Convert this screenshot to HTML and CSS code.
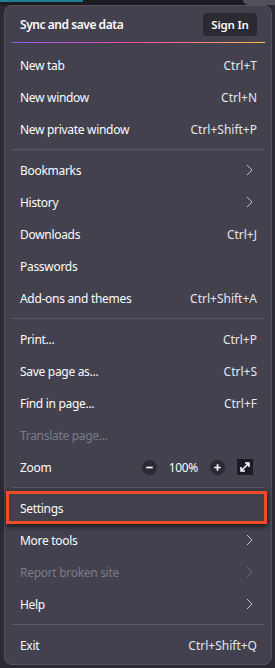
FILE: index.html
```html
<!DOCTYPE html>
<html lang="en">
<head>
    <meta charset="UTF-8">
    <meta name="viewport" content="width=device-width, initial-scale=1.0">
    <title>App menu</title>
    <link rel="stylesheet" href="styles.css">
</head>
<body>
    <div class="topbar">
        <div class="tab-line"></div>
        <div class="top-right"></div>
    </div>

    <div class="panel">
        <!-- Account header -->
        <div class="header">
            <span class="header-title">Sync and save data</span>
            <button class="sign-in">Sign In</button>
        </div>
        <div class="gradient-line"></div>

        <div class="item"><span class="label">New tab</span><span class="shortcut">Ctrl+T</span></div>
        <div class="item"><span class="label">New window</span><span class="shortcut">Ctrl+N</span></div>
        <div class="item"><span class="label">New private window</span><span class="shortcut">Ctrl+Shift+P</span></div>

        <div class="separator"></div>

        <div class="item"><span class="label">Bookmarks</span>
            <svg class="chevron" viewBox="0 0 16 16"><path d="M6 3l5 5-5 5"/></svg>
        </div>
        <div class="item"><span class="label">History</span>
            <svg class="chevron" viewBox="0 0 16 16"><path d="M6 3l5 5-5 5"/></svg>
        </div>
        <div class="item"><span class="label">Downloads</span><span class="shortcut">Ctrl+J</span></div>
        <div class="item"><span class="label">Passwords</span></div>
        <div class="item"><span class="label">Add-ons and themes</span><span class="shortcut">Ctrl+Shift+A</span></div>

        <div class="separator"></div>

        <div class="item"><span class="label">Print...</span><span class="shortcut">Ctrl+P</span></div>
        <div class="item"><span class="label">Save page as...</span><span class="shortcut">Ctrl+S</span></div>
        <div class="item"><span class="label">Find in page...</span><span class="shortcut">Ctrl+F</span></div>
        <div class="item disabled"><span class="label">Translate page...</span></div>
        <div class="item">
            <span class="label">Zoom</span>
            <div class="zoom-controls">
                <span class="zoom-btn">
                    <svg viewBox="0 0 14 14"><path d="M4 7h6"/></svg>
                </span>
                <span class="zoom-value">100%</span>
                <span class="zoom-btn">
                    <svg viewBox="0 0 14 14"><path d="M4 7h6M7 4v6"/></svg>
                </span>
                <span class="fullscreen">
                    <svg viewBox="0 0 16 16">
                        <path d="M4 12l8-8M8 4h4v4M4 8v4h4"/>
                    </svg>
                </span>
            </div>
        </div>

        <div class="separator"></div>

        <div class="item highlight"><span class="label">Settings</span></div>
        <div class="item"><span class="label">More tools</span>
            <svg class="chevron" viewBox="0 0 16 16"><path d="M6 3l5 5-5 5"/></svg>
        </div>
        <div class="item disabled"><span class="label">Report broken site</span>
            <svg class="chevron" viewBox="0 0 16 16"><path d="M6 3l5 5-5 5"/></svg>
        </div>
        <div class="item"><span class="label">Help</span>
            <svg class="chevron" viewBox="0 0 16 16"><path d="M6 3l5 5-5 5"/></svg>
        </div>

        <div class="separator"></div>

        <div class="item"><span class="label">Exit</span><span class="shortcut">Ctrl+Shift+Q</span></div>
    </div>
</body>
</html>
```

FILE: styles.css
```css
body {
    margin: 0;
    padding: 0;
    font-family: "Noto Sans", "Open Sans", sans-serif;
    font-size: 12px;
    color: #fbfbfe;
    background: #2b2a33;
    height: 668px;
    overflow: hidden;
}

.topbar {
    height: 5px;
    display: flex;
    justify-content: space-between;
    background: #1c1b22;
}

.tab-line {
    width: 83px;
    height: 2px;
    background: #1f7f91;
}

.top-right {
    width: 32px;
    height: 5px;
    background: #52525e;
    border-bottom-left-radius: 5px;
}

.panel {
    box-sizing: border-box;
    width: 268px;
    margin-left: 4px;
    background: #42414d;
    border: 1px solid #52525e;
    border-radius: 8px;
    padding-bottom: 3px;
}

.header {
    display: flex;
    justify-content: space-between;
    align-items: center;
    padding: 7px 14px 6px 15px;
}

.header-title {
    font-weight: 600;
    letter-spacing: -0.45px;
}

.sign-in {
    width: 54px;
    height: 23px;
    padding: 0;
    border: none;
    border-radius: 4px;
    background: #2b2a33;
    color: #fbfbfe;
    font-family: inherit;
    font-size: 11.5px;
    font-weight: 600;
    letter-spacing: -0.2px;
}

.gradient-line {
    height: 1px;
    margin: 0 6px 6px 7px;
    background: linear-gradient(90deg, #9059ff 0%, #ff4aa2 52%, #ffbd4f 100%);
}

.item {
    height: 32px;
    display: flex;
    justify-content: space-between;
    align-items: center;
    padding: 0 14px 0 15px;
}

.label {
    letter-spacing: -0.3px;
}

.shortcut {
    color: #e6e6ec;
}

.chevron {
    width: 16px;
    height: 16px;
    fill: none;
    stroke: #bfbfc9;
    stroke-width: 1;
}

.item.disabled {
    color: #7c7b87;
}

.item.disabled .chevron {
    stroke: #6a6975;
}

.separator {
    height: 1px;
    margin: 4px 6px 4px 7px;
    background: #5b5b66;
}

.zoom-controls {
    display: flex;
    align-items: center;
}

.zoom-btn {
    width: 15px;
    height: 15px;
    border-radius: 50%;
    background: #2b2a33;
    display: flex;
}

.zoom-btn svg,
.fullscreen svg {
    width: 100%;
    height: 100%;
    fill: none;
    stroke: #fbfbfe;
    stroke-width: 1.6;
}

.zoom-value {
    margin: 0 12px;
    letter-spacing: -0.3px;
}

.fullscreen {
    width: 16px;
    height: 16px;
    margin-left: 12px;
    margin-right: 4px;
    background: #1c1b22;
    display: flex;
}

.item.highlight {
    position: relative;
}

/* annotation box drawn over the Settings row */
.item.highlight::after {
    content: "";
    position: absolute;
    top: -1px;
    left: 1px;
    right: 4px;
    height: 33px;
    box-sizing: border-box;
    border: 3px solid #f24b28;
    box-shadow: 0 2px 6px rgba(0, 0, 0, 0.7);
}
```
